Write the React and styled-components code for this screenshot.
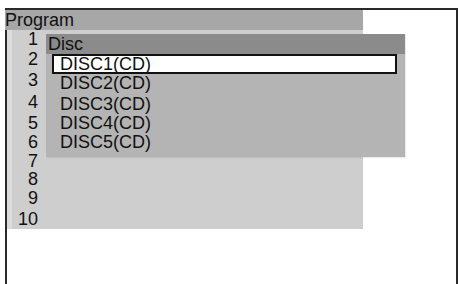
import React from 'react';
import styled, { createGlobalStyle } from 'styled-components';

const GlobalStyle = createGlobalStyle`
  html, body {
    margin: 0;
    padding: 0;
    background: #ffffff;
    overflow: hidden;
  }
  body {
    font-family: "Liberation Sans", Arial, sans-serif;
    color: #111111;
  }
`;

const Screen = styled.div`
  position: relative;
  box-sizing: border-box;
  margin: 8px 0 0 5px;
  width: 453px;
  height: 276px;
  border: 2px solid #2a2a2a;
  border-bottom: none;
  background: #ffffff;
`;

const ProgramPanel = styled.div`
  width: 356px;
  height: 219px;
  display: flex;
  flex-direction: column;
  background: #cecece;
`;

const TitleBar = styled.div`
  height: 20px;
  line-height: 20px;
  font-size: 18px;
  margin-left: -2px;
  background: #a7a7a7;
`;

const Body = styled.div`
  flex: 1;
  border-left: 5px solid #dcdcdc;
`;

const NumberList = styled.ul`
  list-style: none;
  margin: 0;
  padding: 0;
  width: 26px;
  margin-top: -1px;
  text-align: right;
  font-size: 18px;
`;

const NumberRow = styled.li`
  height: ${p => p.$h}px;
  line-height: ${p => p.$h}px;
`;

const Popup = styled.div`
  position: absolute;
  left: 39px;
  top: 24px;
  width: 359px;
  background: #b4b4b4;
  box-shadow: 1px 1px 1px rgba(0, 0, 0, 0.08);
`;

const PopupHeader = styled.div`
  height: 20px;
  line-height: 20px;
  padding-left: 2px;
  font-size: 18px;
  background: #8b8b8b;
`;

const ItemList = styled.ul`
  list-style: none;
  margin: 0;
  padding: 0 8px 5px 6px;
`;

const Item = styled.li`
  box-sizing: border-box;
  height: ${p => p.$h}px;
  line-height: ${p => (p.$selected ? p.$h - 4 : p.$h)}px;
  padding-left: ${p => (p.$selected ? 6 : 8)}px;
  font-size: 18px;
  background: ${p => (p.$selected ? '#ffffff' : 'transparent')};
  border: ${p => (p.$selected ? '2px solid #111' : 'none')};
`;

const numberHeights = [20, 21, 21, 22, 20, 19, 19, 17, 21, 20];
const discs = [
  { label: 'DISC1(CD)', h: 20 },
  { label: 'DISC2(CD)', h: 19 },
  { label: 'DISC3(CD)', h: 22 },
  { label: 'DISC4(CD)', h: 17 },
  { label: 'DISC5(CD)', h: 20 },
];

export default function App() {
  return (
    <>
      <GlobalStyle />
      <Screen>
        <ProgramPanel>
          <TitleBar>Program</TitleBar>
          <Body>
            <NumberList>
              {numberHeights.map((h, i) => (
                <NumberRow key={i} $h={h}>{i + 1}</NumberRow>
              ))}
            </NumberList>
          </Body>
        </ProgramPanel>
        <Popup>
          <PopupHeader>Disc</PopupHeader>
          <ItemList>
            {discs.map((d, i) => (
              <Item key={d.label} $h={d.h} $selected={i === 0}>{d.label}</Item>
            ))}
          </ItemList>
        </Popup>
      </Screen>
    </>
  );
}
